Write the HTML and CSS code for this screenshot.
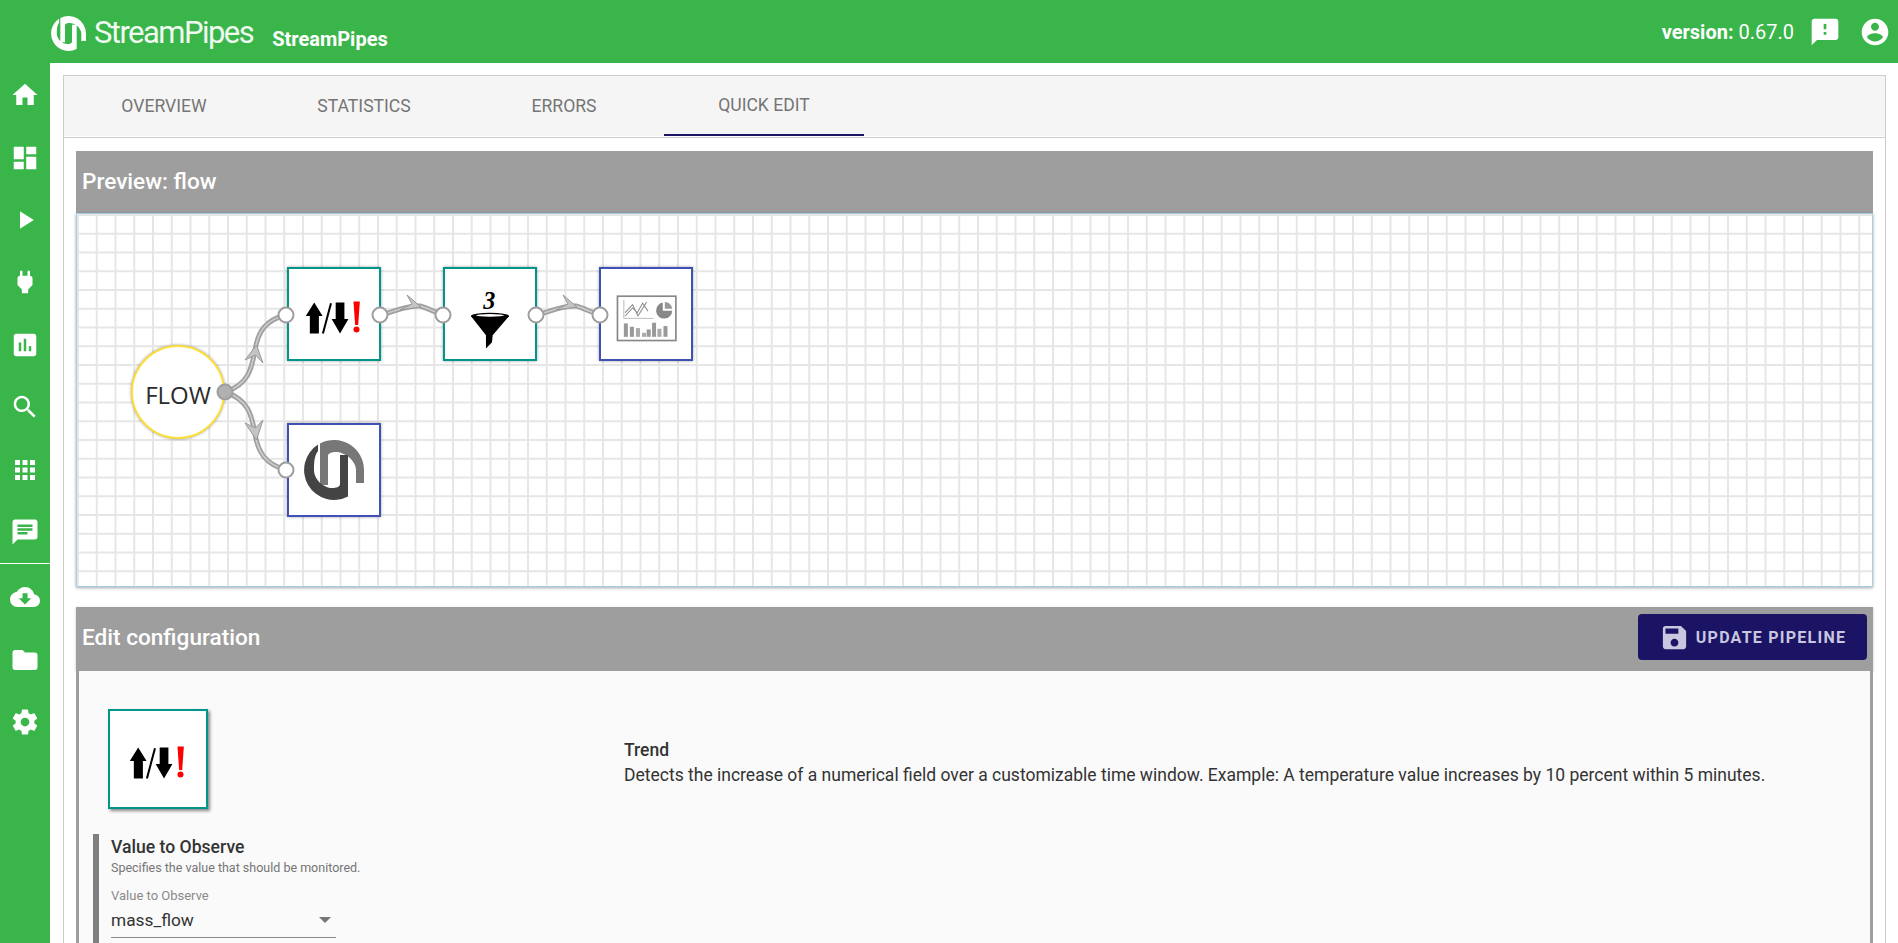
FILE: index.html
```html
<!DOCTYPE html>
<html lang="en">
<head>
<meta charset="utf-8">
<title>StreamPipes</title>
<link rel="stylesheet" href="styles.css">
</head>
<body>
<svg class="defs" width="0" height="0" aria-hidden="true">
  <defs>
    <symbol id="trend-icon" viewBox="0 0 280 280">
      <path d="M81 106 L106 146 L95 146 L95 198 L68 198 L68 146 L56 146 Z" fill="#000"/>
      <path d="M145 106 L171 106 L171 155 L183 155 L158 198 L133 155 L145 155 Z" fill="#000"/>
      <line x1="131" y1="108" x2="107" y2="198" stroke="#000" stroke-width="6"/>
      <path d="M198 103 L217 103 L212 173 L203 173 Z" fill="#f00"/>
      <circle cx="207" cy="186" r="9" fill="#f00"/>
    </symbol>
    <symbol id="sp-mark" viewBox="0 0 60 60">
      <path class="mark-a" d="M16 45 V3.5 A30 30 0 0 1 60 30 V43 H52 V30 C52 20 40 12 32 12 C28 12 24 13 24 16 V45 Z"/>
      <path class="mark-b" d="M44 15 V56.5 A30 30 0 0 1 14 4.6 L14 11 C10 16 10 24 10 30 C10 40 20 48 28 48 C32 48 36 47 36 44 V15 Z"/>
    </symbol>
  </defs>
</svg>

<div class="app">
  <header class="topbar">
    <svg class="logo-mark" viewBox="0 0 60 60"><use href="#sp-mark"/></svg>
    <span class="logo-text">StreamPipes</span>
    <span class="app-name">StreamPipes</span>
    <div class="topbar-right">
      <span class="version"><b>version:</b> 0.67.0</span>
      <svg class="top-icon feedback" viewBox="0 0 24 24"><path d="M20 2H4c-1.1 0-1.99.9-1.99 2L2 22l4-4h14c1.1 0 2-.9 2-2V4c0-1.1-.9-2-2-2zm-7 12h-2v-2h2v2zm0-4h-2V6h2v4z"/></svg>
      <svg class="top-icon" viewBox="0 0 24 24"><path d="M12 2C6.48 2 2 6.48 2 12s4.48 10 10 10 10-4.48 10-10S17.52 2 12 2zm0 3c1.66 0 3 1.34 3 3s-1.34 3-3 3-3-1.34-3-3 1.34-3 3-3zm0 14.2c-2.5 0-4.71-1.28-6-3.22.03-1.99 4-3.08 6-3.08 1.99 0 5.97 1.09 6 3.08-1.29 1.94-3.5 3.22-6 3.22z"/></svg>
    </div>
  </header>

  <nav class="sidebar">
    <div class="nav-group first">
      <a class="nav-item"><svg viewBox="0 0 24 24"><path d="M10 20v-6h4v6h5v-8h3L12 3 2 12h3v8z"/></svg></a>
      <a class="nav-item"><svg viewBox="0 0 24 24"><path d="M3 13h8V3H3v10zm0 8h8v-6H3v6zm10 0h8V11h-8v10zm0-18v6h8V3h-8z"/></svg></a>
      <a class="nav-item"><svg viewBox="0 0 24 24"><path d="M8 5v14l11-7z"/></svg></a>
      <a class="nav-item"><svg viewBox="0 0 24 24"><path d="M16.01 7L16 3h-2v4h-4V3H8v4h-.01C7 6.99 6 7.99 6 8.99v5.49L9.5 18v3h5v-3l3.5-3.51v-5.5c0-1-1-2-1.99-1.99z"/></svg></a>
      <a class="nav-item"><svg viewBox="0 0 24 24"><path d="M19 3H5c-1.1 0-2 .9-2 2v14c0 1.1.9 2 2 2h14c1.1 0 2-.9 2-2V5c0-1.1-.9-2-2-2zM9 17H7v-7h2v7zm4 0h-2V7h2v10zm4 0h-2v-4h2v4z"/></svg></a>
      <a class="nav-item"><svg viewBox="0 0 24 24"><path d="M15.5 14h-.79l-.28-.27C15.41 12.59 16 11.11 16 9.5 16 5.91 13.09 3 9.5 3S3 5.91 3 9.5 5.91 16 9.5 16c1.61 0 3.09-.59 4.23-1.57l.27.28v.79l5 4.99L20.49 19l-4.99-5zm-6 0C7.01 14 5 11.99 5 9.5S7.01 5 9.5 5 14 7.01 14 9.5 11.99 14 9.5 14z"/></svg></a>
      <a class="nav-item"><svg viewBox="0 0 24 24"><path d="M4 8h4V4H4v4zm6 12h4v-4h-4v4zm-6 0h4v-4H4v4zm0-6h4v-4H4v4zm6 0h4v-4h-4v4zm6-10v4h4V4h-4zm-6 4h4V4h-4v4zm6 6h4v-4h-4v4zm0 6h4v-4h-4v4z"/></svg></a>
      <a class="nav-item"><svg viewBox="0 0 24 24"><path d="M20 2H4c-1.1 0-1.99.9-1.99 2L2 22l4-4h14c1.1 0 2-.9 2-2V4c0-1.1-.9-2-2-2zM6 9h12v2H6V9zm8 5H6v-2h8v2zm4-6H6V6h12v2z"/></svg></a>
    </div>
    <div class="nav-group second">
      <a class="nav-item"><svg viewBox="0 0 24 24"><path d="M19.35 10.04C18.67 6.59 15.64 4 12 4 9.11 4 6.6 5.64 5.35 8.04 2.34 8.36 0 10.91 0 14c0 3.31 2.69 6 6 6h13c2.76 0 5-2.24 5-5 0-2.64-2.05-4.78-4.65-4.96zM17 13l-5 5-5-5h3V9h4v4h3z"/></svg></a>
      <a class="nav-item"><svg viewBox="0 0 24 24"><path d="M10 4H4c-1.1 0-1.99.9-1.99 2L2 18c0 1.1.9 2 2 2h16c1.1 0 2-.9 2-2V8c0-1.1-.9-2-2-2h-8l-2-2z"/></svg></a>
      <a class="nav-item"><svg viewBox="0 0 24 24"><path d="M19.43 12.98c.04-.32.07-.64.07-.98s-.03-.66-.07-.98l2.11-1.65c.19-.15.24-.42.12-.64l-2-3.46c-.12-.22-.39-.3-.61-.22l-2.49 1c-.52-.4-1.08-.73-1.69-.98l-.38-2.65C14.46 2.18 14.25 2 14 2h-4c-.25 0-.46.18-.49.42l-.38 2.65c-.61.25-1.17.59-1.69.98l-2.49-1c-.23-.09-.49 0-.61.22l-2 3.46c-.13.22-.07.49.12.64l2.11 1.65c-.04.32-.07.65-.07.98s.03.66.07.98l-2.11 1.65c-.19.15-.24.42-.12.64l2 3.46c.12.22.39.3.61.22l2.49-1c.52.4 1.08.73 1.69.98l.38 2.65c.03.24.24.42.49.42h4c.25 0 .46-.18.49-.42l.38-2.65c.61-.25 1.17-.59 1.69-.98l2.49 1c.23.09.49 0 .61-.22l2-3.46c.12-.22.07-.49-.12-.64l-2.11-1.65zM12 15.5c-1.93 0-3.5-1.57-3.5-3.5s1.57-3.5 3.5-3.5 3.5 1.57 3.5 3.5-1.57 3.5-3.5 3.5z"/></svg></a>
    </div>
  </nav>

  <main class="main">
    <div class="card">
      <div class="tabs">
        <div class="tab">Overview</div>
        <div class="tab">Statistics</div>
        <div class="tab">Errors</div>
        <div class="tab active">Quick Edit</div>
      </div>
      <div class="card-body">
        <section class="panel">
          <div class="panel-head"><h2>Preview: flow</h2></div>
          <div class="canvas">
            <div class="source">FLOW</div>
            <div class="node teal node-trend"><svg class="node-icon" viewBox="0 0 280 280"><use href="#trend-icon"/></svg></div>
            <div class="node teal node-filter">
              <svg class="node-icon" viewBox="0 0 280 280">
                <text x="138" y="126" class="three">3</text>
                <path d="M83 146 L197 146 L148 203 L146 224 L128 243 L128 203 Z" fill="#000"/>
                <ellipse cx="140" cy="146" rx="57" ry="10" fill="#000"/>
                <ellipse cx="140" cy="144" rx="42" ry="4" fill="#fff"/>
              </svg>
            </div>
            <div class="node blue node-viz">
              <svg class="node-icon" viewBox="0 0 280 280">
                <rect x="55" y="87" width="174" height="132" fill="#fff" stroke="#888" stroke-width="5"/>
                <path d="M74 98 V153 H162" fill="none" stroke="#999" stroke-width="2"/>
                <path d="M78 146 L100 122 L114 136 L130 108 L146 132 M78 136 L100 112 L116 146 L142 104" fill="none" stroke="#888" stroke-width="3"/>
                <path d="M190 106 V130 H218 A24 24 0 1 1 190 106 Z" fill="#888"/>
                <path d="M196 104 A24 24 0 0 1 218 124 H196 Z" fill="#999"/>
                <rect x="74" y="168" width="12" height="40" fill="#999"/>
                <rect x="92" y="178" width="12" height="30" fill="#999"/>
                <rect x="110" y="182" width="12" height="26" fill="#aaa"/>
                <rect x="128" y="196" width="12" height="12" fill="#aaa"/>
                <rect x="142" y="186" width="12" height="22" fill="#999"/>
                <rect x="158" y="166" width="12" height="42" fill="#999"/>
                <rect x="174" y="184" width="12" height="24" fill="#aaa"/>
                <rect x="192" y="176" width="12" height="32" fill="#999"/>
              </svg>
            </div>
            <div class="node blue node-dash"><svg class="mark-gray" viewBox="0 0 60 60"><use href="#sp-mark"/></svg></div>
            <svg class="wires" viewBox="0 0 1794 372">
              <g transform="translate(-77 -214)">
                <path class="wire" d="M225 392 C250 384 252 366 255 350 C258 332 265 320 286 315"/>
                <path class="wire-in" d="M225 392 C250 384 252 366 255 350 C258 332 265 320 286 315"/>
                <path class="arrow" d="M256.5 345 L263 363 L255.5 355 L245 360 Z"/>
                <path class="wire" d="M225 392 C250 400 252 418 255 434 C258 452 265 464 286 470"/>
                <path class="wire-in" d="M225 392 C250 400 252 418 255 434 C258 452 265 464 286 470"/>
                <path class="arrow" d="M256.5 440 L263 420 L255.5 428 L245 423 Z"/>
                <path class="wire" d="M380 315 C395 312 405 305 420 306 C428 308 434 312 443 315"/>
                <path class="wire-in" d="M380 315 C395 312 405 305 420 306 C428 308 434 312 443 315"/>
                <path class="arrow" d="M421 307 L407 295 L412 304 L400 310 Z"/>
                <path class="wire" d="M536 315 C551 312 561 305 576 306 C584 308 590 312 600 315"/>
                <path class="wire-in" d="M536 315 C551 312 561 305 576 306 C584 308 590 312 600 315"/>
                <path class="arrow" d="M577 307 L563 295 L568 304 L556 310 Z"/>
                <circle class="port out" cx="225" cy="392" r="7.5"/>
                <circle class="port" cx="286" cy="315" r="7.5"/>
                <circle class="port" cx="380" cy="315" r="7.5"/>
                <circle class="port" cx="443" cy="315" r="7.5"/>
                <circle class="port" cx="536" cy="315" r="7.5"/>
                <circle class="port" cx="600" cy="315" r="7.5"/>
                <circle class="port" cx="286" cy="470" r="7.5"/>
              </g>
            </svg>
          </div>
        </section>

        <section class="panel edit">
          <div class="panel-head">
            <h2>Edit configuration</h2>
            <button class="update-btn">
              <svg viewBox="0 0 24 24"><path d="M17 3H5c-1.11 0-2 .9-2 2v14c0 1.1.89 2 2 2h14c1.1 0 2-.9 2-2V7l-4-4zm-5 16c-1.66 0-3-1.34-3-3s1.34-3 3-3 3 1.34 3 3-1.34 3-3 3zm3-10H5V5h10v4z"/></svg>
              <span>Update Pipeline</span>
            </button>
          </div>
          <div class="edit-body">
            <div class="info-row">
              <div class="info-icon"><svg class="node-icon" viewBox="0 0 280 280"><use href="#trend-icon"/></svg></div>
              <div class="info-text">
                <div class="info-title">Trend</div>
                <div>Detects the increase of a numerical field over a customizable time window. Example: A temperature value increases by 10 percent within 5 minutes.</div>
              </div>
            </div>
            <div class="param">
              <div class="param-title">Value to Observe</div>
              <div class="param-desc">Specifies the value that should be monitored.</div>
              <div class="select">
                <div class="select-label">Value to Observe</div>
                <div class="select-value"><span>mass_flow</span><i class="caret"></i></div>
              </div>
            </div>
          </div>
        </section>
      </div>
    </div>
  </main>
</div>
</body>
</html>
```

FILE: styles.css
```css
* { box-sizing: border-box; }
html, body { margin: 0; height: 100%; overflow: hidden; }
body { font-family: Roboto, "Liberation Sans", sans-serif; color: #333; background: #fff; }
.defs { position: absolute; }

.mark-a { fill: var(--mark-a, #fff); }
.mark-b { fill: var(--mark-b, #fff); }

.app {
  height: 943px;
  display: grid;
  grid-template-columns: 50px 1fr;
  grid-template-rows: 63px 880px;
}

.topbar {
  grid-column: 1 / 3;
  background: #39b54a;
  color: #fff;
  display: flex;
  align-items: center;
  padding-left: 51px;
  padding-right: 7px;
}
.logo-mark { width: 35px; height: 35px; margin-top: 3px; }
.logo-text {
  font-family: Roboto, sans-serif;
  font-size: 31px;
  font-weight: 400;
  letter-spacing: -1.55px;
  margin-left: 8px;
  margin-top: 1px;
  color: #f0faf1;
}
.app-name { font-size: 20px; font-weight: 700; margin-left: 19px; margin-top: 14px; }
.topbar-right { margin-left: auto; display: flex; align-items: center; }
.version { font-size: 20px; margin-right: 15px; }
.version b { font-weight: 700; }
.top-icon { width: 32px; height: 32px; fill: #fff; }
.feedback { margin-right: 18px; }

.sidebar { background: #39b54a; padding-top: 1px; }
.nav-group.first { border-bottom: 1px solid #fff; height: 500px; }
.nav-group.second { padding-top: 2px; }
.nav-item { display: flex; align-items: center; justify-content: center; height: 62.4px; }
.nav-item svg { width: 30px; height: 30px; fill: #fff; }

.main { padding: 12px 12px 0 13px; overflow: hidden; background: #fff; }
.card { border: 1px solid #ccc; border-bottom: 0; height: 900px; }
.tabs {
  display: flex;
  height: 62px;
  padding-bottom: 1px;
  background: #f5f5f5 content-box;
  border-bottom: 1px solid #ccc;
}
.tab {
  width: 200px;
  display: flex;
  align-items: center;
  justify-content: center;
  font-size: 17.6px;
  color: #757575;
  text-transform: uppercase;
}
.tab.active { border-bottom: 2px solid #1b1464; }

.card-body { padding: 13px 12px 0; }
.panel-head {
  height: 62px;
  background: #9e9e9e;
  display: flex;
  align-items: center;
  justify-content: space-between;
  padding: 0 6px 2px 6px;
}
.panel-head h2 { margin: 0; font-size: 22.6px; font-weight: 500; color: #fff; }

.canvas {
  position: relative;
  height: 374px;
  border: 1px solid #a6cfe2;
  box-shadow: 0 1px 3px rgba(0,0,0,.35);
  background-color: #fff;
  background-image:
    linear-gradient(#e6e6e6 1.5px, transparent 1.5px),
    linear-gradient(90deg, #e6e6e6 1.5px, transparent 1.5px);
  background-size: 18.75px 18.75px;
  overflow: hidden;
}
.source {
  position: absolute;
  left: 54px;
  top: 131px;
  width: 94px;
  height: 94px;
  padding-top: 5px;
  border-radius: 50%;
  background: #fff;
  border: 2px solid #fdde3a;
  box-shadow: 0 0 3px rgba(0,0,0,.4);
  display: flex;
  align-items: center;
  justify-content: center;
  font-family: "Open Sans", sans-serif;
  font-size: 24px;
  color: #2b2b2b;
}
.node {
  position: absolute;
  width: 94px;
  height: 94px;
  background: #fff;
  border: 2px solid;
  box-shadow: 0 0 3px rgba(0,0,0,.35);
  display: flex;
  align-items: center;
  justify-content: center;
}
.teal { border-color: #009688; }
.blue { border-color: #3f51b5; }
.node-trend { left: 210px; top: 53px; }
.node-filter { left: 366px; top: 53px; }
.node-viz { left: 522px; top: 53px; }
.node-dash { left: 210px; top: 209px; }
.node-icon { width: 94px; height: 94px; flex: none; }
.mark-gray { width: 60px; height: 60px; --mark-a: #777; --mark-b: #444; }
.three { font-family: "Liberation Serif", serif; font-style: italic; font-weight: 700; font-size: 72px; text-anchor: middle; fill: #000; }

.wires { position: absolute; left: 0; top: 0; width: 1794px; height: 372px; pointer-events: none; }
.wire { fill: none; stroke: #a0a0a0; stroke-width: 5; }
.wire-in { fill: none; stroke: #cfcfcf; stroke-width: 1.5; }
.arrow { fill: #c4c4c4; stroke: #999; stroke-width: 1; }
.port { fill: #fff; stroke: #9e9e9e; stroke-width: 2; }
.port.out { fill: #b0b0b0; }

.edit { margin-top: 20px; }
.edit .panel-head { height: 64px; padding-bottom: 4px; box-shadow: 0 1px 3px rgba(0,0,0,.2); }
.update-btn {
  width: 229px;
  height: 46px;
  border: 0;
  border-radius: 4px;
  background: #1b1464;
  color: #c9c6e0;
  display: flex;
  align-items: center;
  justify-content: center;
  gap: 6px;
  font-family: Roboto, sans-serif;
  font-size: 16px;
  font-weight: 700;
  letter-spacing: 1.25px;
  text-transform: uppercase;
}
.update-btn svg { width: 31px; height: 31px; fill: #c9c6e0; }
.edit-body {
  background: #fafafa;
  border-left: 3px solid #9e9e9e;
  border-right: 3px solid #9e9e9e;
  height: 300px;
  padding: 38px 0 0 14px;
}
.info-row { display: flex; align-items: center; padding-left: 15px; }
.info-icon {
  width: 100px;
  height: 100px;
  flex: none;
  background: #fff;
  border: 2px solid #009688;
  box-shadow: 2px 2px 3px rgba(0,0,0,.45);
  display: flex;
  align-items: center;
  justify-content: center;
}
.info-text { margin-left: 416px; font-size: 17.5px; line-height: 25px; margin-top: 7px; }
.info-title { font-weight: 500; }

.param { margin-top: 25px; border-left: 6px solid #808080; padding: 4px 0 0 12px; height: 200px; }
.param-title { font-size: 17.6px; font-weight: 500; line-height: 19px; }
.param-desc { font-size: 12.5px; color: #757575; line-height: 14px; margin-top: 4px; }
.select { width: 225px; margin-top: 14px; border-bottom: 1px solid #8a8a8a; padding-bottom: 6px; }
.select-label { font-size: 13px; color: #8a8a8a; line-height: 14px; }
.select-value { display: flex; justify-content: space-between; align-items: center; font-size: 17.3px; line-height: 22px; margin-top: 6px; padding-right: 5px; }
.caret { border-left: 6px solid transparent; border-right: 6px solid transparent; border-top: 6px solid #757575; }
```
